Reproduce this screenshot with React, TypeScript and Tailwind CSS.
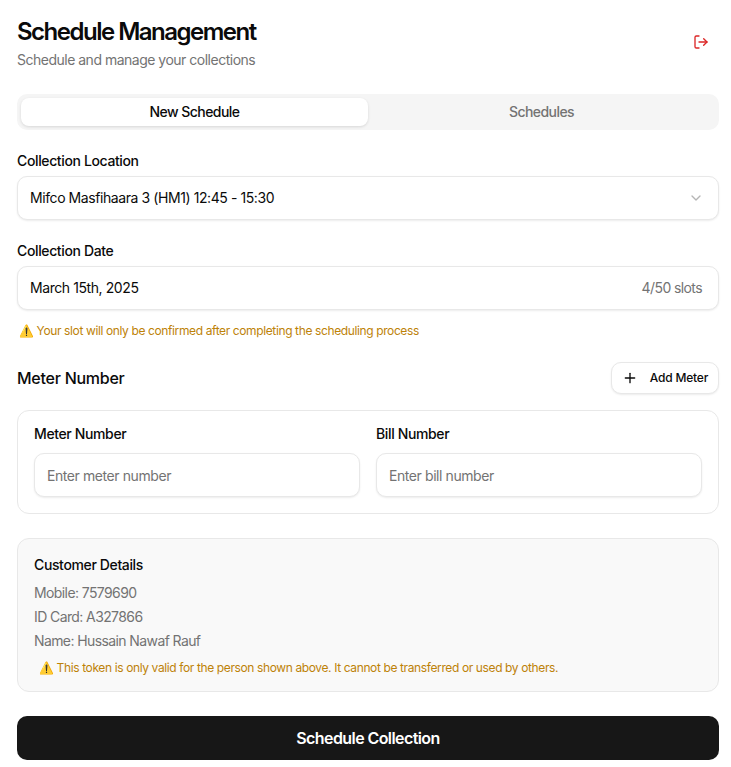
import { ChevronDown, LogOut, Plus } from "lucide-react";

function Field({ className = "", children }: { className?: string; children: React.ReactNode }) {
  return (
    <div
      className={`flex h-[44px] items-center justify-between rounded-[10px] border border-[#e8e8e8] bg-white px-3 text-sm tracking-[-0.42px] shadow-[0_1px_2px_rgba(0,0,0,0.08)] ${className}`}
    >
      {children}
    </div>
  );
}

export default function App() {
  return (
    <div className="min-h-[767px] bg-white pl-[17px] pr-3 pt-[17px] font-['Inter',sans-serif] text-[#0a0a0a]">
      {/* Header */}
      <div className="flex items-center justify-between">
        <div>
          <h1 className="text-2xl leading-[30px] font-semibold tracking-[-1.5px]">Schedule Management</h1>
          <p className="mt-[3px] text-sm leading-5 tracking-[-0.5px] text-[#737373]">Schedule and manage your collections</p>
        </div>
        <button className="mb-[4px] mr-[10px] text-[#dc2626]">
          <LogOut className="h-4 w-4" />
        </button>
      </div>

      {/* Tabs */}
      <div className="mt-[24px] flex h-9 items-center rounded-[10px] bg-[#f5f5f5] p-1 text-sm font-medium tracking-[-0.55px]">
        <div className="flex h-7 flex-1 items-center justify-center rounded-lg bg-white shadow-[0_1px_3px_rgba(0,0,0,0.12)]">
          New Schedule
        </div>
        <div className="flex h-7 flex-1 items-center justify-center text-[#737373]">Schedules</div>
      </div>

      <label className="mt-[21px] block text-sm leading-5 font-medium tracking-[-0.37px]">Collection Location</label>
      <Field className="mt-[5px]">
        <span>Mifco Masfihaara 3 (HM1) 12:45 - 15:30</span>
        <ChevronDown className="mr-[2px] h-4 w-4 text-[#b5b5b5]" />
      </Field>

      <label className="mt-[21px] block text-sm leading-5 font-medium tracking-[-0.37px]">Collection Date</label>
      <Field className="mt-[5px]">
        <span>March 15th, 2025</span>
        <span className="mr-1 tracking-[-0.6px] text-[#737373]">4/50 slots</span>
      </Field>

      <p className="mt-[13px] pl-[2px] text-xs leading-4 tracking-[-0.38px] text-[#bd8208]">⚠️ Your slot will only be confirmed after completing the scheduling process</p>

      {/* Meters */}
      <div className="mt-[23px] flex items-center justify-between">
        <h2 className="text-base font-medium tracking-[-0.25px]">Meter Number</h2>
        <button className="flex h-8 w-[108px] items-center justify-center gap-3 rounded-[10px] border border-[#e8e8e8] bg-white text-xs font-medium tracking-[-0.2px] shadow-[0_1px_2px_rgba(0,0,0,0.08)]">
          <Plus className="h-4 w-4" />
          Add Meter
        </button>
      </div>

      <div className="mt-4 grid grid-cols-2 gap-4 rounded-xl border border-[#e8e8e8] bg-white px-4 pb-4 pt-[13px]">
        <div>
          <label className="block text-sm leading-5 font-medium tracking-[-0.37px]">Meter Number</label>
          <Field className="mt-[9px] pt-[2px] text-[#737373]">Enter meter number</Field>
        </div>
        <div>
          <label className="block text-sm leading-5 font-medium tracking-[-0.37px]">Bill Number</label>
          <Field className="mt-[9px] pt-[2px] text-[#737373]">Enter bill number</Field>
        </div>
      </div>

      {/* Customer */}
      <div className="mt-6 h-[154px] rounded-xl border border-[#e8e8e8] bg-[#f9f9f9] px-4 pt-4">
        <h3 className="text-sm leading-5 font-medium tracking-[-0.37px]">Customer Details</h3>
        <div className="mt-[8px] space-y-1 text-sm leading-5 tracking-[-0.6px] text-[#737373]">
          <p>Mobile: 7579690</p>
          <p>ID Card: A327866</p>
          <p>Name: Hussain Nawaf Rauf</p>
        </div>
        <p className="mt-[9px] pl-[5px] text-xs leading-4 tracking-[-0.38px] text-[#bd8208]">⚠️ This token is only valid for the person shown above. It cannot be transferred or used by others.</p>
      </div>

      <button className="mt-6 flex h-11 w-full items-center justify-center rounded-[10px] bg-[#171717] text-base font-semibold tracking-[-0.58px] text-white">
        Schedule Collection
      </button>
    </div>
  );
}
